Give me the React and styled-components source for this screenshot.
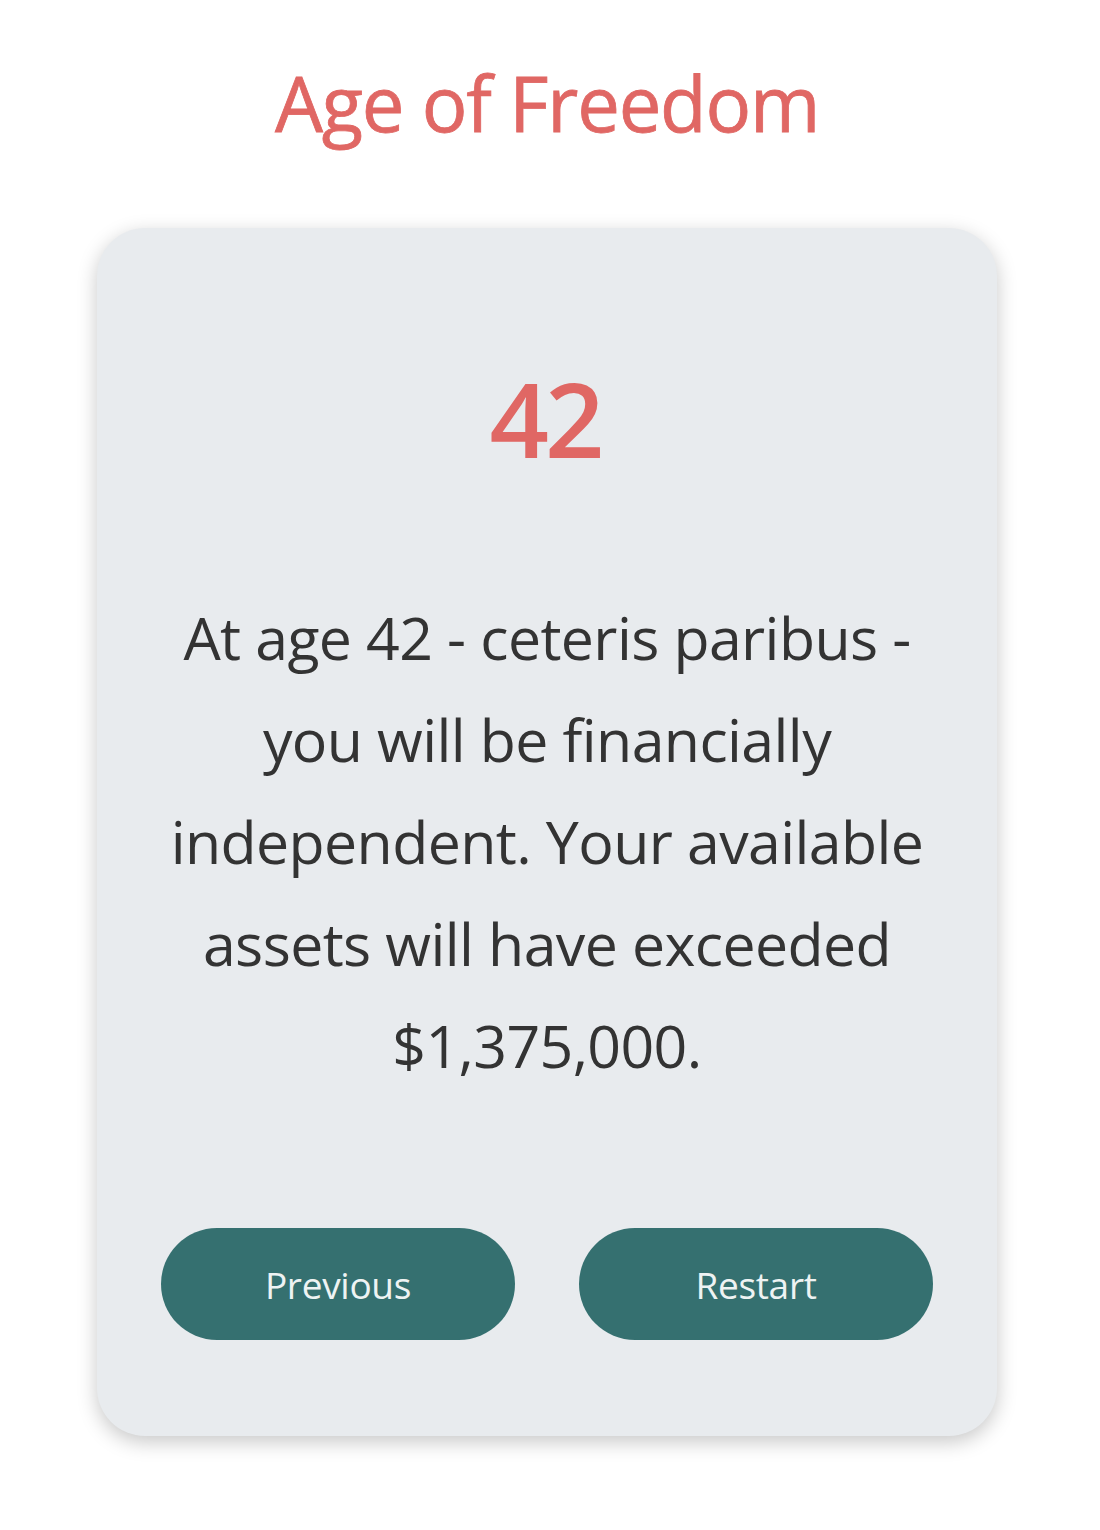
import React from "react";
import styled, { createGlobalStyle } from "styled-components";

const Global = createGlobalStyle`
  html, body { margin: 0; padding: 0; background: #ffffff; }
  body { font-family: "Open Sans", "Noto Sans", sans-serif; }
`;

const Page = styled.div`
  width: 1094px;
  min-height: 1530px;
  display: flex;
  flex-direction: column;
  align-items: center;
  padding-top: 53px;
  box-sizing: border-box;
`;

const Title = styled.h1`
  margin: 0;
  font-family: "Open Sans", sans-serif;
  font-weight: 500;
  font-size: 76px;
  line-height: 100px;
  color: #e06764;
  letter-spacing: -1.2px;
  -webkit-text-stroke: 0.8px #e06764;
`;

const Card = styled.div`
  margin-top: 75px;
  width: 900px;
  height: 1208px;
  box-sizing: border-box;
  background: #e8ebee;
  border-radius: 48px;
  box-shadow: 0 6px 20px rgba(0, 0, 0, 0.22);
  padding: 120px 64px 96px;
  display: flex;
  flex-direction: column;
  align-items: center;
`;

const Age = styled.div`
  font-family: "Open Sans", sans-serif;
  font-weight: 600;
  font-size: 104px;
  line-height: 140px;
  color: #e06764;
  letter-spacing: -4px;
  text-indent: -4px;
`;

const Message = styled.p`
  margin: 98px -10px 0;
  text-align: center;
  font-family: "Open Sans", sans-serif;
  font-size: 59px;
  line-height: 102px;
  color: #333333;
  letter-spacing: -0.6px;
`;

const Actions = styled.div`
  margin-top: auto;
  width: 100%;
  display: flex;
  gap: 64px;
`;

const Button = styled.button`
  flex: 1;
  height: 112px;
  border: none;
  border-radius: 56px;
  background: #357070;
  color: #eef3f3;
  font-family: "Open Sans", sans-serif;
  font-size: 37px;
  cursor: pointer;
  letter-spacing: -0.3px;
`;

export default function App() {
  return (
    <>
      <Global />
      <Page>
        <Title>Age of Freedom</Title>
        <Card>
          <Age>42</Age>
          <Message>
            At age 42 - ceteris paribus - you will be financially independent. Your
            available assets will have exceeded $1,375,000.
          </Message>
          <Actions>
            <Button>Previous</Button>
            <Button>Restart</Button>
          </Actions>
        </Card>
      </Page>
    </>
  );
}
